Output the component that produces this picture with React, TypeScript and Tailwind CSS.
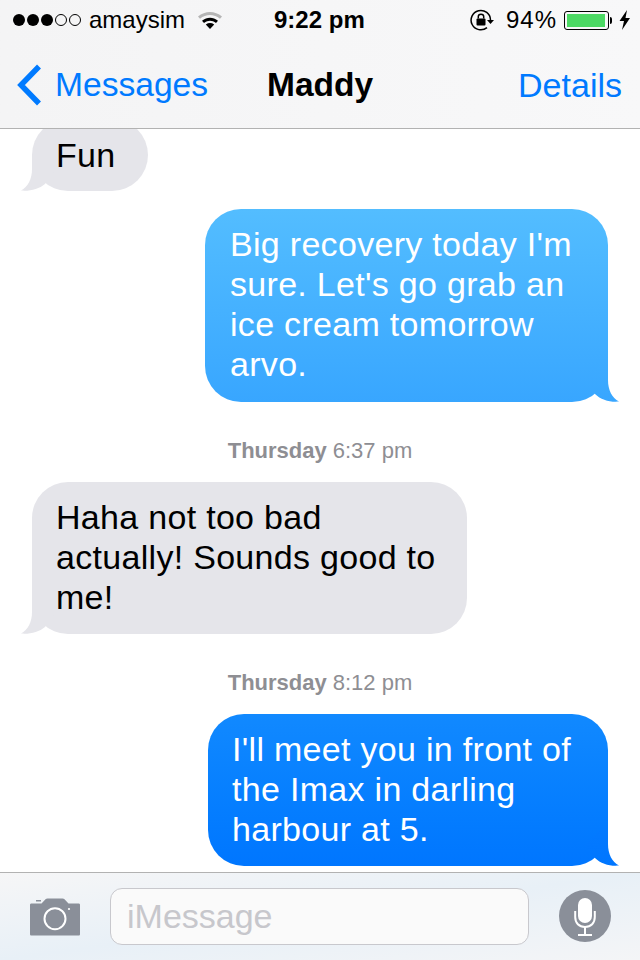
const font = "font-['Liberation_Sans',Arial,sans-serif]";

function LeftTail() {
  return (
    <svg className="absolute bottom-0 left-[-11px]" width="40" height="40" viewBox="0 0 40 40">
      <path d="M11 4 L11 18 C11 28 7 36 0 39.6 C9 40.4 18 38 24 33 L34 20 L20 4 Z" fill="#e5e5ea" />
    </svg>
  );
}

function RightTail({ id, top, bottom }: { id: string; top: string; bottom: string }) {
  return (
    <svg className="absolute bottom-0 right-[-11px]" width="40" height="40" viewBox="0 0 40 40">
      <defs>
        <linearGradient id={id} x1="0" y1="0" x2="0" y2="40" gradientUnits="userSpaceOnUse">
          <stop offset="0" stopColor={top} />
          <stop offset="1" stopColor={bottom} />
        </linearGradient>
      </defs>
      <path d="M29 4 L29 18 C29 28 33 36 40 39.6 C31 40.4 22 38 16 32 L6 20 L20 4 Z" fill={`url(#${id})`} />
    </svg>
  );
}

function WifiIcon() {
  return (
    <svg width="26" height="20" viewBox="0 0 26 20" className="ml-[12px]">
      <path d="M1 6.5 C8 0.5 18 0.5 25 6.5 L23 8.8 C17 3.8 9 3.8 3 8.8 Z" fill="#b5b5b5" />
      <path d="M5 10.8 C10 6.6 16 6.6 21 10.8 L19 13 C15 10 11 10 7 13 Z" fill="#000" />
      <path d="M8.8 14.5 C11.5 12.6 14.5 12.6 17.2 14.5 L13 19 Z" fill="#000" />
    </svg>
  );
}

function LockIcon() {
  return (
    <svg width="24" height="22" viewBox="0 0 24 22">
      <path d="M20.5 11 A9.7 9.7 0 1 0 17 18.6" fill="none" stroke="#000" strokeWidth="1.5" />
      <path d="M17 11 H24 L20.5 15 Z" fill="#000" />
      <rect x="6.5" y="9.5" width="9" height="7" rx="1" fill="#000" />
      <path d="M8.3 9.5 V7.6 C8.3 4.6 13.7 4.6 13.7 7.6 V9.5" fill="none" stroke="#000" strokeWidth="1.5" />
    </svg>
  );
}

function Battery() {
  return (
    <div className="flex items-center">
      <div className="h-[19px] w-[45px] rounded-[3px] border border-black p-[2px]">
        <div className="h-full w-[38px] bg-[#4cd964]" />
      </div>
      <div className="ml-px h-[7px] w-[2px] rounded-r-full bg-black" />
      <svg width="12" height="20" viewBox="0 0 12 20" className="ml-[7px]">
        <path d="M8 0 L0.5 11 H5 L3 20 L11 8 H6.5 Z" fill="#000" />
      </svg>
    </div>
  );
}

function CameraIcon() {
  return (
    <svg width="50" height="38" viewBox="0 0 50 38">
      <path
        d="M1.5 5.5 H11.5 L15.5 1.2 C16 0.7 16.6 0.5 17.5 0.5 H32.5 C33.4 0.5 34 0.7 34.5 1.2 L38.5 5.5 H48.5 C49.5 5.5 50 6 50 7 V36 C50 37 49.5 37.5 48.5 37.5 H1.5 C0.5 37.5 0 37 0 36 V7 C0 6 0.5 5.5 1.5 5.5 Z"
        fill="#8a8f99"
      />
      <rect x="6" y="2" width="5" height="1.5" fill="#8a8f99" />
      <circle cx="25" cy="20.7" r="10.5" fill="none" stroke="#fff" strokeWidth="2" />
      <circle cx="39" cy="11" r="1.1" fill="#fff" />
    </svg>
  );
}

function MicButton() {
  return (
    <div className="mb-[2px] flex h-[52px] w-[52px] items-center justify-center rounded-full bg-[#8a8f99]">
      <svg width="22" height="40" viewBox="0 0 22 40">
        <rect x="4" y="2" width="14" height="25" rx="7" fill="#fff" />
        <path d="M1.2 15 V21 C1.2 27 5 31 11 31 C17 31 20.8 27 20.8 21 V15" fill="none" stroke="#fff" strokeWidth="2" />
        <path d="M11 31 V39" stroke="#fff" strokeWidth="2" />
        <path d="M4 39 H18" stroke="#fff" strokeWidth="2" />
      </svg>
    </div>
  );
}

function Timestamp({ day, time }: { day: string; time: string }) {
  return (
    <div className="flex h-[80px] items-center justify-center pt-[18px] text-[22px] tracking-normal text-[#8e8e93]">
      <span className="font-bold">{day}</span>
      <span className="ml-[6px]">{time}</span>
    </div>
  );
}

export default function App() {
  return (
    <div className={`${font} flex h-[960px] w-[640px] flex-col overflow-hidden bg-white text-black`}>
      <header className="relative z-10 h-[129px] shrink-0 border-b border-[#b2b2b2] bg-gradient-to-r from-[#f4f4f5] to-[#f8f8f9]">
        <div className="relative flex h-[40px] items-center pl-[13px] text-[24px]">
          <div className="flex items-center gap-[2px]">
            <span className="h-[12px] w-[12px] rounded-full bg-black" />
            <span className="h-[12px] w-[12px] rounded-full bg-black" />
            <span className="h-[12px] w-[12px] rounded-full bg-black" />
            <span className="h-[12px] w-[12px] rounded-full border border-black" />
            <span className="h-[12px] w-[12px] rounded-full border border-black" />
          </div>
          <span className="ml-[8px]">amaysim</span>
          <WifiIcon />
          <span className="ml-[51px] font-bold">9:22 pm</span>
          <div className="ml-auto flex items-center pr-[9px]">
            <LockIcon />
            <span className="ml-[12px] tracking-[1px]">94%</span>
            <div className="ml-[7px]">
              <Battery />
            </div>
          </div>
        </div>
        <div className="flex h-[88px] items-center pl-[16px] pr-[18px] pt-[2px] text-[34px] text-[#007aff]">
          <svg width="26" height="42" viewBox="0 0 26 42" className="shrink-0">
            <path d="M23 2.5 L5 21 L23 39.5" fill="none" stroke="#007aff" strokeWidth="5.5" />
          </svg>
          <span className="ml-[13px] text-[33.6px]">Messages</span>
          <span className="ml-[59px] text-[33.5px] font-bold text-black">Maddy</span>
          <span className="ml-auto">Details</span>
        </div>
      </header>

      <main className="flex min-h-0 flex-1 flex-col pl-[32px] pr-[32px] text-[34px] leading-[40px] tracking-[0.3px]">
        <div className="relative mt-[-10px] h-[72px] w-[116px] self-start rounded-[36px] bg-[#e5e5ea] pl-[24px] pt-[16px]">
          <LeftTail />
          <span className="relative">Fun</span>
        </div>

        <div className="relative mt-[18px] h-[193px] w-[403px] self-end rounded-[36px] bg-gradient-to-b from-[#53bdff] to-[#38a6ff] pl-[25px] pr-[24px] pt-[15px] text-white">
          <RightTail id="tail-light" top="#3eabff" bottom="#38a6ff" />
          <p className="relative">Big recovery today I'm sure. Let's go grab an ice cream tomorrow arvo.</p>
        </div>

        <Timestamp day="Thursday" time="6:37 pm" />

        <div className="relative h-[152px] w-[435px] self-start rounded-[36px] bg-[#e5e5ea] pl-[24px] pr-[25px] pt-[15px]">
          <LeftTail />
          <p className="relative">Haha not too bad actually! Sounds good to me!</p>
        </div>

        <Timestamp day="Thursday" time="8:12 pm" />

        <div className="relative h-[152px] w-[400px] self-end rounded-[36px] bg-gradient-to-b from-[#1189ff] to-[#0076ff] pl-[24px] pr-[25px] pt-[15px] text-white">
          <RightTail id="tail-dark" top="#047aff" bottom="#0076ff" />
          <p className="relative">I'll meet you in front of the Imax in darling harbour at 5.</p>
        </div>
      </main>

      <footer className="flex h-[88px] shrink-0 items-center border-t border-[#b2b2b2] bg-gradient-to-br from-[#f6f6f7] via-[#e8f0f7] to-[#f4f5f7] pl-[30px] pr-[29px]">
        <CameraIcon />
        <div className="ml-[30px] flex h-[57px] w-[419px] items-center rounded-[12px] border border-[#c8c8cd] bg-[#fafafa] pl-[16px] text-[34px] text-[#c7c7cc]">
          iMessage
        </div>
        <div className="ml-auto">
          <MicButton />
        </div>
      </footer>
    </div>
  );
}
